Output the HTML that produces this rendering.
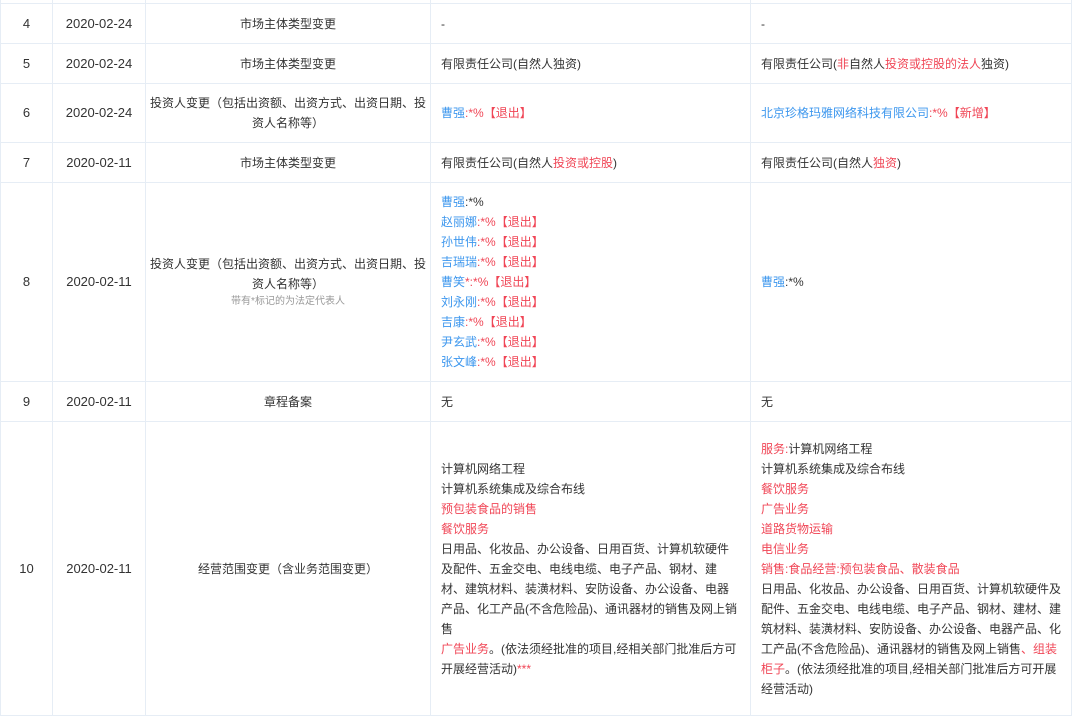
<!DOCTYPE html>
<html><head><meta charset="utf-8"><style>
body{margin:0;background:#fff;width:1080px;height:718px;overflow:hidden;font-family:"Liberation Sans","Noto Sans CJK SC",sans-serif;font-size:12px;color:#333;}
table{position:absolute;left:0;top:-37px;border-collapse:collapse;table-layout:fixed;width:1071px;}
td{border:1px solid #e6edf5;padding:0 10px;line-height:20px;vertical-align:middle;}
td.c{text-align:center;padding:0 4px}
.b{color:#3d97ee}.r{color:#f04656}.g{color:#999;font-size:10px;line-height:16px}
.n{font-size:13px}
</style></head><body>
<table>
<colgroup><col style="width:52px"><col style="width:93px"><col style="width:285px"><col style="width:320px"><col style="width:321px"></colgroup>
<tr style="height:40px"><td></td><td></td><td></td><td></td><td></td></tr>
<tr style="height:40px"><td class="c n">4</td><td class="c n">2020-02-24</td><td class="c">市场主体类型变更</td><td>-</td><td>-</td></tr>
<tr style="height:40px"><td class="c n">5</td><td class="c n">2020-02-24</td><td class="c">市场主体类型变更</td><td>有限责任公司(自然人独资)</td><td>有限责任公司(<span class="r">非</span>自然人<span class="r">投资或控股的法人</span>独资)</td></tr>
<tr style="height:59px"><td class="c n">6</td><td class="c n">2020-02-24</td><td class="c">投资人变更（包括出资额、出资方式、出资日期、投资人名称等）</td><td><span class="b">曹强</span><span class="r">:*%【退出】</span></td><td><span class="b">北京珍格玛雅网络科技有限公司</span><span class="r">:*%【新增】</span></td></tr>
<tr style="height:40px"><td class="c n">7</td><td class="c n">2020-02-11</td><td class="c">市场主体类型变更</td><td>有限责任公司(自然人<span class="r">投资或控股</span>)</td><td>有限责任公司(自然人<span class="r">独资</span>)</td></tr>
<tr style="height:199px"><td class="c n">8</td><td class="c n">2020-02-11</td><td class="c">投资人变更（包括出资额、出资方式、出资日期、投资人名称等）<div class="g">带有*标记的为法定代表人</div></td><td><span class="b">曹强</span>:*%<br><span class="b">赵丽娜</span><span class="r">:*%【退出】</span><br><span class="b">孙世伟</span><span class="r">:*%【退出】</span><br><span class="b">吉瑞瑞</span><span class="r">:*%【退出】</span><br><span class="b">曹笑</span><span class="r">*:*%【退出】</span><br><span class="b">刘永刚</span><span class="r">:*%【退出】</span><br><span class="b">吉康</span><span class="r">:*%【退出】</span><br><span class="b">尹玄武</span><span class="r">:*%【退出】</span><br><span class="b">张文峰</span><span class="r">:*%【退出】</span></td><td><span class="b">曹强</span>:*%</td></tr>
<tr style="height:40px"><td class="c n">9</td><td class="c n">2020-02-11</td><td class="c">章程备案</td><td>无</td><td>无</td></tr>
<tr style="height:294px"><td class="c n">10</td><td class="c n">2020-02-11</td><td class="c">经营范围变更（含业务范围变更）</td><td>计算机网络工程<br>计算机系统集成及综合布线<br><span class="r">预包装食品的销售</span><br><span class="r">餐饮服务</span><br>日用品、化妆品、办公设备、日用百货、计算机软硬件及配件、五金交电、电线电缆、电子产品、钢材、建材、建筑材料、装潢材料、安防设备、办公设备、电器产品、化工产品(不含危险品)、通讯器材的销售及网上销售<br><span class="r">广告业务</span>。(依法须经批准的项目,经相关部门批准后方可开展经营活动)<span class="r">***</span></td><td><span class="r">服务:</span>计算机网络工程<br>计算机系统集成及综合布线<br><span class="r">餐饮服务</span><br><span class="r">广告业务</span><br><span class="r">道路货物运输</span><br><span class="r">电信业务</span><br><span class="r">销售:食品经营:预包装食品、散装食品</span><br>日用品、化妆品、办公设备、日用百货、计算机软硬件及配件、五金交电、电线电缆、电子产品、钢材、建材、建筑材料、装潢材料、安防设备、办公设备、电器产品、化工产品(不含危险品)、通讯器材的销售及网上销售<span class="r">、组装柜子</span>。(依法须经批准的项目,经相关部门批准后方可开展经营活动)</td></tr>
</table>
</body></html>
